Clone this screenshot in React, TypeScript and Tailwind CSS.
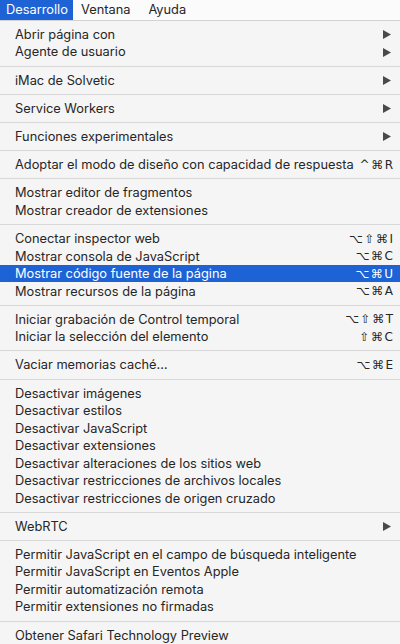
import React from "react";

type Item =
  | { type: "sep" }
  | { type: "item"; label: string; shortcut?: string; submenu?: boolean; selected?: boolean };

const sep: Item = { type: "sep" };
const it = (label: string, extra: Partial<Extract<Item, { type: "item" }>> = {}): Item => ({
  type: "item",
  label,
  ...extra,
});

const menuItems: Item[] = [
  it("Abrir página con", { submenu: true }),
  it("Agente de usuario", { submenu: true }),
  sep,
  it("iMac de Solvetic", { submenu: true }),
  sep,
  it("Service Workers", { submenu: true }),
  sep,
  it("Funciones experimentales", { submenu: true }),
  sep,
  it("Adoptar el modo de diseño con capacidad de respuesta", { shortcut: "^⌘R" }),
  sep,
  it("Mostrar editor de fragmentos"),
  it("Mostrar creador de extensiones"),
  sep,
  it("Conectar inspector web", { shortcut: "⌥⇧⌘I" }),
  it("Mostrar consola de JavaScript", { shortcut: "⌥⌘C" }),
  it("Mostrar código fuente de la página", { shortcut: "⌥⌘U", selected: true }),
  it("Mostrar recursos de la página", { shortcut: "⌥⌘A" }),
  sep,
  it("Iniciar grabación de Control temporal", { shortcut: "⌥⇧⌘T" }),
  it("Iniciar la selección del elemento", { shortcut: "⇧⌘C" }),
  sep,
  it("Vaciar memorias caché…", { shortcut: "⌥⌘E" }),
  sep,
  it("Desactivar imágenes"),
  it("Desactivar estilos"),
  it("Desactivar JavaScript"),
  it("Desactivar extensiones"),
  it("Desactivar alteraciones de los sitios web"),
  it("Desactivar restricciones de archivos locales"),
  it("Desactivar restricciones de origen cruzado"),
  sep,
  it("WebRTC", { submenu: true }),
  sep,
  it("Permitir JavaScript en el campo de búsqueda inteligente"),
  it("Permitir JavaScript en Eventos Apple"),
  it("Permitir automatización remota"),
  it("Permitir extensiones no firmadas"),
  sep,
  it("Obtener Safari Technology Preview"),
];

function Arrow({ light }: { light?: boolean }) {
  return (
    <svg width="8" height="9" viewBox="0 0 8 9" className="shrink-0">
      <path d="M0 0 L8 4.5 L0 9 Z" fill={light ? "#ffffff" : "#4a4a4a"} />
    </svg>
  );
}

export default function App() {
  return (
    <div
      className="w-[400px] h-[644px] overflow-hidden bg-[#f5f5f5] text-[#262626] text-[12.8px]"
      style={{ fontFamily: "Inter, 'Liberation Sans', sans-serif" }}
    >
      <div className="flex h-[21px] bg-[#fbfbfb] border-b border-[#d2d2d2]">
        <div className="flex items-center h-[20px] w-[73px] pl-[6px] bg-[#1d63d6] text-white">
          Desarrollo
        </div>
        <div className="flex items-center h-[20px] pl-[8px]">Ventana</div>
        <div className="flex items-center h-[20px] pl-[18px]">Ayuda</div>
      </div>
      <div className="pt-[4.75px]">
        {menuItems.map((item, i) =>
          item.type === "sep" ? (
            <div key={i} className="h-[10.7px] flex items-center">
              <div className="w-full h-px bg-[#d8d8d8]" />
            </div>
          ) : (
            <div
              key={i}
              className={`h-[17.5px] flex items-center justify-between pl-[15px] pr-[7px] ${
                item.selected ? "bg-[#1d63d6] text-white" : ""
              }`}
            >
              <span className="whitespace-nowrap">{item.label}</span>
              {item.shortcut && (
                <span
                  className="whitespace-nowrap tracking-[1.5px] -mr-[1.5px]"
                  style={{ fontFamily: "'DejaVu Sans', sans-serif", fontSize: "12px" }}
                >
                  {item.shortcut}
                </span>
              )}
              {item.submenu && (
                <span className="pr-[2px]">
                  <Arrow light={item.selected} />
                </span>
              )}
            </div>
          )
        )}
      </div>
    </div>
  );
}
